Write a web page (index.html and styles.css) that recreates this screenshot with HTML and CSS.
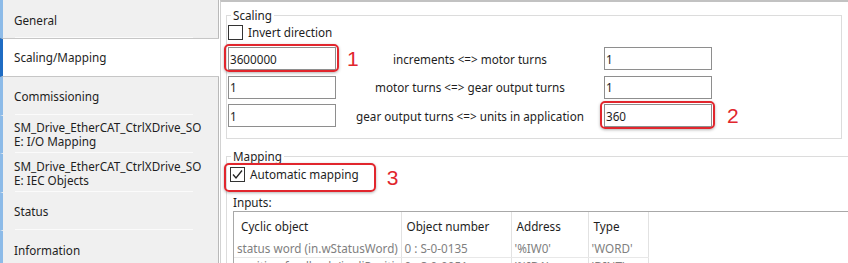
FILE: index.html
```html
<!DOCTYPE html>
<html lang="en">
<head>
    <meta charset="UTF-8">
    <meta name="viewport" content="width=device-width, initial-scale=1.0">
    <title>Scaling/Mapping</title>
    <link rel="stylesheet" href="styles.css">
</head>
<body>
    <div class="tabs">
        <div class="tab">General</div>
        <div class="tab active">Scaling/Mapping</div>
        <div class="tab">Commissioning</div>
        <div class="tab">SM_Drive_EtherCAT_CtrlXDrive_SO<br>E: I/O Mapping</div>
        <div class="tab">SM_Drive_EtherCAT_CtrlXDrive_SO<br>E: IEC Objects</div>
        <div class="tab">Status</div>
        <div class="tab">Information</div>
    </div>

    <div class="editor">
        <fieldset class="group">
            <legend>Scaling</legend>
            <label class="check"><span class="box"></span>Invert direction</label>

            <div class="ratio-grid">
                <span class="marked"><input type="text" value="3600000"></span>
                <span class="ratio-label"><span class="num first">1</span>increments &lt;=&gt; motor turns</span>
                <input type="text" value="1">
                <span></span>

                <input type="text" value="1">
                <span class="ratio-label">motor turns &lt;=&gt; gear output turns</span>
                <input type="text" value="1">
                <span></span>

                <input type="text" value="1">
                <span class="ratio-label">gear output turns &lt;=&gt; units in application</span>
                <span class="marked"><input type="text" value="360"></span>
                <span class="num">2</span>
            </div>
        </fieldset>

        <fieldset class="group mapping">
            <legend>Mapping</legend>
            <div class="check-row">
                <label class="check marked-row"><span class="box"><svg width="13" height="13" viewBox="0 0 13 13"><polyline points="2,6.5 5,10 11,2.5" fill="none" stroke="#222" stroke-width="1.3"/></svg></span>Automatic mapping</label>
                <span class="num">3</span>
            </div>
            <p class="inputs-title">Inputs:</p>
            <div class="table-wrap">
                <table>
                    <thead>
                        <tr>
                            <th class="c1">Cyclic object</th>
                            <th class="c2">Object number</th>
                            <th class="c3">Address</th>
                            <th class="c4">Type</th>
                        </tr>
                    </thead>
                    <tbody>
                        <tr>
                            <td>status word (in.wStatusWord)</td>
                            <td>0 : S-0-0135</td>
                            <td>'%IW0'</td>
                            <td>'WORD'</td>
                        </tr>
                        <tr>
                            <td>position feedback (in.diPosition)</td>
                            <td>0 : S-0-0051</td>
                            <td>'%ID1'</td>
                            <td>'DINT'</td>
                        </tr>
                    </tbody>
                </table>
            </div>
        </fieldset>
    </div>
</body>
</html>
```

FILE: styles.css
```css
body {
    margin: 0;
    width: 848px;
    height: 263px;
    overflow: hidden;
    display: flex;
    font-family: "Noto Sans", sans-serif;
    font-size: 11.7px;
    color: #1e1e1e;
    background-color: #fff;
}

/* left tab list */
.tabs {
    width: 218px;
    flex: none;
    background-color: #f0f0f0;
    border-right: 1px solid #b9b9b9;
}

.tab {
    height: 37.5px;
    display: flex;
    align-items: center;
    padding-left: 11px;
    line-height: 14px;
    border-left: 3px solid #8dbbe8;
    border-bottom: 1px solid #f0f0f0;
    background: linear-gradient(#fbfbfb, #fbfbfb) no-repeat 12px 100% / 178px 1px;
}

.tab:first-child {
    padding-top: 2px;
    height: 35.5px;
}

.tab.active {
    margin-top: -1px;
    margin-right: -1px;
    border-top: 1px solid #c6c6c6;
    border-bottom: 1px solid #c6c6c6;
    border-left-color: #1f6cc3;
    background: #fff;
}

/* right side */
.editor {
    flex: 1;
    margin-left: 1px;
    border-top: 2px solid #c2c2c2;
    border-left: 1px solid #d2d2d2;
    padding: 6px 6px 0 5px;
    overflow: hidden;
}

.group {
    margin: 0;
    padding: 0 0 11px 1px;
    border: 1px solid #dcdcdc;
    min-width: 0;
}

.group legend {
    margin-left: 3px;
    padding: 0 2px;
    line-height: 14px;
}

.check {
    display: flex;
    align-items: center;
    gap: 5px;
    height: 16px;
    margin-top: 2px;
}

.box {
    width: 13px;
    height: 13px;
    border: 1px solid #333;
    background-color: #fff;
    display: flex;
}

.ratio-grid {
    display: grid;
    grid-template-columns: 108px 268px 108px auto;
    grid-auto-rows: 23px;
    row-gap: 5.5px;
    align-items: center;
    margin-top: 7px;
}

input {
    box-sizing: border-box;
    display: block;
    width: 108px;
    height: 23px;
    margin: 0;
    padding: 0 1px;
    border: 1px solid #8e8e8e;
    font: inherit;
    color: #1e1e1e;
    background-color: #fff;
}

.ratio-label {
    position: relative;
    align-self: stretch;
    display: flex;
    align-items: center;
    justify-content: center;
}

.num {
    color: #e1262d;
    font-family: "Liberation Sans", Arial, sans-serif;
    font-size: 21px;
    line-height: 23px;
    margin-left: 15px;
}

/* number sits at the left edge of the label cell */
.num.first {
    position: absolute;
    left: 11px;
    top: 0;
    margin-left: 0;
}

.marked {
    position: relative;
    display: block;
}

.marked::after,
.marked-row::after {
    content: "";
    position: absolute;
    top: -3px;
    left: -4px;
    right: -3px;
    bottom: -2px;
    border: 2px solid #e1262d;
    border-radius: 5px;
    box-shadow: 0 1px 3px rgba(0, 0, 0, 0.3);
}

/* mapping */
.mapping {
    margin-top: 10px;
    margin-right: -10px;
    padding-left: 1px;
}

.check-row {
    display: flex;
    align-items: center;
    height: 16px;
    margin: 3px 0 0 2px;
}

.marked-row {
    position: relative;
    margin-top: 0;
}

.marked-row::after {
    top: -3px;
    left: -6px;
    right: -17px;
    bottom: -10px;
}

.check-row .num {
    margin-left: 28px;
    margin-top: 6px;
}

.inputs-title {
    margin: 13px 0 0 5px;
    line-height: 14px;
}

.table-wrap {
    margin: 2px 0 0 5px;
    border-top: 1px solid #a8a8a8;
    border-left: 1px solid #a8a8a8;
}

table {
    width: 414px;
    border-collapse: collapse;
    table-layout: fixed;
}

th, td {
    box-sizing: border-box;
    border-right: 1px solid #e2e2e2;
    text-align: left;
    white-space: nowrap;
    overflow: hidden;
    padding: 0 0 0 3px;
}

th {
    font-weight: normal;
    height: 28px;
    padding-left: 7px;
}

td {
    height: 17px;
    color: #808080;
    border-bottom: 1px solid #e8e8e8;
}

th.c2,
th.c3,
th.c4 {
    padding-left: 5px;
}

.c1 { width: 167px; }
.c2 { width: 110px; }
.c3 { width: 77px; }
.c4 { width: 60px; }
```
